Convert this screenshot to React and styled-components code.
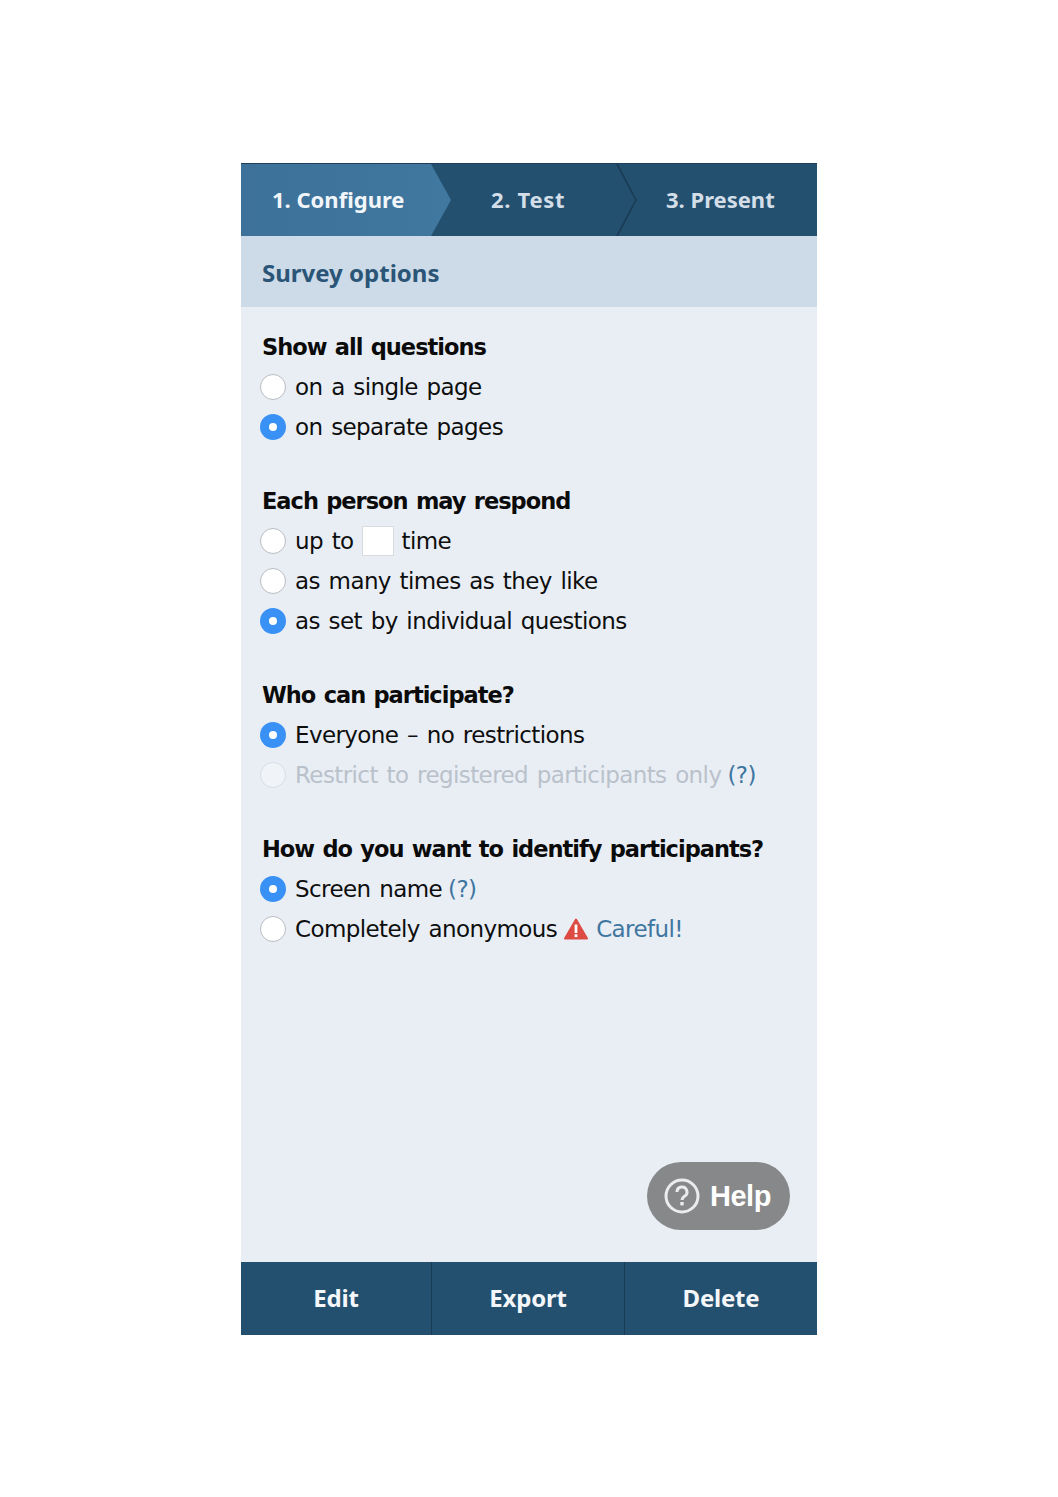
import React from 'react';
import styled, { createGlobalStyle } from 'styled-components';

const Global = createGlobalStyle`
  html, body { margin: 0; padding: 0; background: #fff; }
`;
const Page = styled.div`
  width: 1058px; height: 1497px; padding-top: 163px; box-sizing: border-box;
  display: flex; justify-content: center;
`;
const Phone = styled.div`
  position: relative; width: 576px; height: 1172px; display: flex; flex-direction: column;
  background: #e9eef5;
`;
const Steps = styled.nav`
  height: 73px; display: flex; background: #24506f; flex: none; border-top: 1px solid #1d3f5c; box-sizing: border-box;
`;
const Step = styled.div`
  position: relative; width: ${p => p.$w}px; padding: 0 0 3px ${p => p.$pl}px; box-sizing: border-box;
  display: flex; align-items: center; color: ${p => p.$active ? '#f2f6fa' : '#d3dee8'};
  font: 700 22px/1 "Noto Sans", "Open Sans", sans-serif; letter-spacing: ${p => p.$ls || 0}px;
  background: ${p => p.$active ? 'linear-gradient(90deg,#3d7199,#40789f)' : 'transparent'};
  clip-path: ${p => p.$active ? 'polygon(0 0, 190px 0, 100% 50%, 190px 100%, 0 100%)' : 'none'};
`;
const Chevron = styled.svg`
  position: absolute; right: 0; top: 0; width: 24px; height: 72px;
`;
const Band = styled.h2`
  margin: 0; height: 71px; flex: none; box-sizing: border-box; padding: 2px 0 0 21px;
  display: flex; align-items: center; background: #cddae7; color: #2a5577;
  font: 700 24px/1 "Noto Sans", "Open Sans", sans-serif;
`;
const Main = styled.main`
  flex: 1; padding: 20px 0 0 19px;
`;
const Section = styled.section`
  & + & { margin-top: 34px; }
`;
const Heading = styled.h3`
  margin: 0 0 0 2px; height: 40px; display: flex; align-items: center; color: #0b0b0b; white-space: pre;
  font: 700 22.5px/1 "DejaVu Sans", sans-serif; letter-spacing: -1px; word-spacing: 1.5px;
`;
const Row = styled.label`
  height: 40px; display: flex; align-items: center; gap: 9px; white-space: pre;
  color: ${p => p.$disabled ? '#b9c1ca' : '#0e0e0e'};
  font: 400 23px/1 "DejaVu Sans", sans-serif; letter-spacing: -0.6px; word-spacing: 2px;
`;
const Radio = styled.span`
  width: 26px; height: 26px; border-radius: 50%; box-sizing: border-box; flex: none; position: relative;
  background: ${p => p.$on ? '#3a91f5' : p.$disabled ? '#f0f3f8' : '#fff'};
  border: ${p => p.$on ? 'none' : `1.5px solid ${p.$disabled ? '#d8dde3' : '#b9bdc1'}`};
  &::after {
    content: ''; display: ${p => p.$on ? 'block' : 'none'}; position: absolute; left: 9px; top: 9px;
    width: 8px; height: 8px; border-radius: 50%; background: #fff;
  }
`;
const Field = styled.span`
  display: block; width: 32px; height: 30px; box-sizing: border-box; flex: none;
  background: #fff; border: 1px solid #d9dcdf; margin: 0 -1px;
`;
const Hint = styled.span`
  color: #3f76a0; margin-left: ${p => p.$flush ? 0 : 6}px;
`;
const Warn = styled.svg`
  width: 24px; height: 22px; margin: 0 -1px 0 -2px; flex: none;
`;
const HelpPill = styled.button`
  position: absolute; left: 406px; top: 999px; width: 143px; height: 68px; border: 0; border-radius: 34px;
  background: #878889; color: #fff; display: flex; align-items: center; gap: 10px; padding: 0 0 0 17px;
  font: 700 29px/1 "Liberation Sans", sans-serif; letter-spacing: -0.5px;
`;
const Footer = styled.footer`
  height: 73px; flex: none; display: grid; grid-template-columns: 191px 193px 192px; background: #24506f;
`;
const FootBtn = styled.button`
  border: 0; background: none; color: #f4f7fa; font: 700 24px/1 "Noto Sans", "Open Sans", sans-serif; padding: 0 0 2px;
  letter-spacing: -0.2px;
  border-right: ${p => p.$last ? 'none' : '1px solid #1a3a55'};
`;

const Opt = ({ on, disabled, children }) => (
  <Row $disabled={disabled}>
    <Radio $on={on} $disabled={disabled} />
    {children}
  </Row>
);

export default function App() {
  return (
    <>
      <Global />
      <Page>
        <Phone>
          <Steps>
            <Step $active $w={210} $pl={31}>1. Configure</Step>
            <Step $w={186} $pl={40} $ls={0.7}>
              2. Test
              <Chevron viewBox="0 0 24 72" fill="none">
                <path d="M4 0 L23 36 L4 72" stroke="#1a3a55" strokeWidth="1.6" />
              </Chevron>
            </Step>
            <Step $w={180} $pl={29}>3. Present</Step>
          </Steps>
          <Band>Survey options</Band>
          <Main>
            <Section>
              <Heading>Show all questions</Heading>
              <Opt><span>on a single page</span></Opt>
              <Opt on><span>on separate pages</span></Opt>
            </Section>
            <Section>
              <Heading>Each person may respond</Heading>
              <Opt><span>up to</span><Field /><span>time</span></Opt>
              <Opt><span>as many times as they like</span></Opt>
              <Opt on><span>as set by individual questions</span></Opt>
            </Section>
            <Section>
              <Heading>Who can participate?</Heading>
              <Opt on><span>Everyone – no restrictions</span></Opt>
              <Opt disabled><span>Restrict to registered participants only<Hint>(?)</Hint></span></Opt>
            </Section>
            <Section>
              <Heading>How do you want to identify participants?</Heading>
              <Opt on><span>Screen name<Hint>(?)</Hint></span></Opt>
              <Opt>
                <span>Completely anonymous</span>
                <Warn viewBox="0 0 24 22">
                  <path d="M12 1.5 L23 20.5 H1 Z" fill="#dd4b43" stroke="#dd4b43" strokeWidth="2" strokeLinejoin="round" />
                  <rect x="10.6" y="6.5" width="2.8" height="8.5" fill="#fff" />
                  <rect x="10.6" y="16.3" width="2.8" height="2.8" fill="#fff" />
                </Warn>
                <Hint $flush>Careful!</Hint>
              </Opt>
            </Section>
          </Main>
          <HelpPill>
            <svg width="36" height="36" viewBox="0 0 36 36" fill="none">
              <circle cx="18" cy="18" r="16" stroke="#ececec" strokeWidth="3" />
              <path d="M13 14 a5 5 0 1 1 7.5 4.3 c-1.6 1 -2.5 1.8 -2.5 3.7" stroke="#ececec" strokeWidth="3" />
              <rect x="16.3" y="24" width="3.4" height="3.4" fill="#ececec" />
            </svg>
            Help
          </HelpPill>
          <Footer>
            <FootBtn>Edit</FootBtn>
            <FootBtn>Export</FootBtn>
            <FootBtn $last>Delete</FootBtn>
          </Footer>
        </Phone>
      </Page>
    </>
  );
}
